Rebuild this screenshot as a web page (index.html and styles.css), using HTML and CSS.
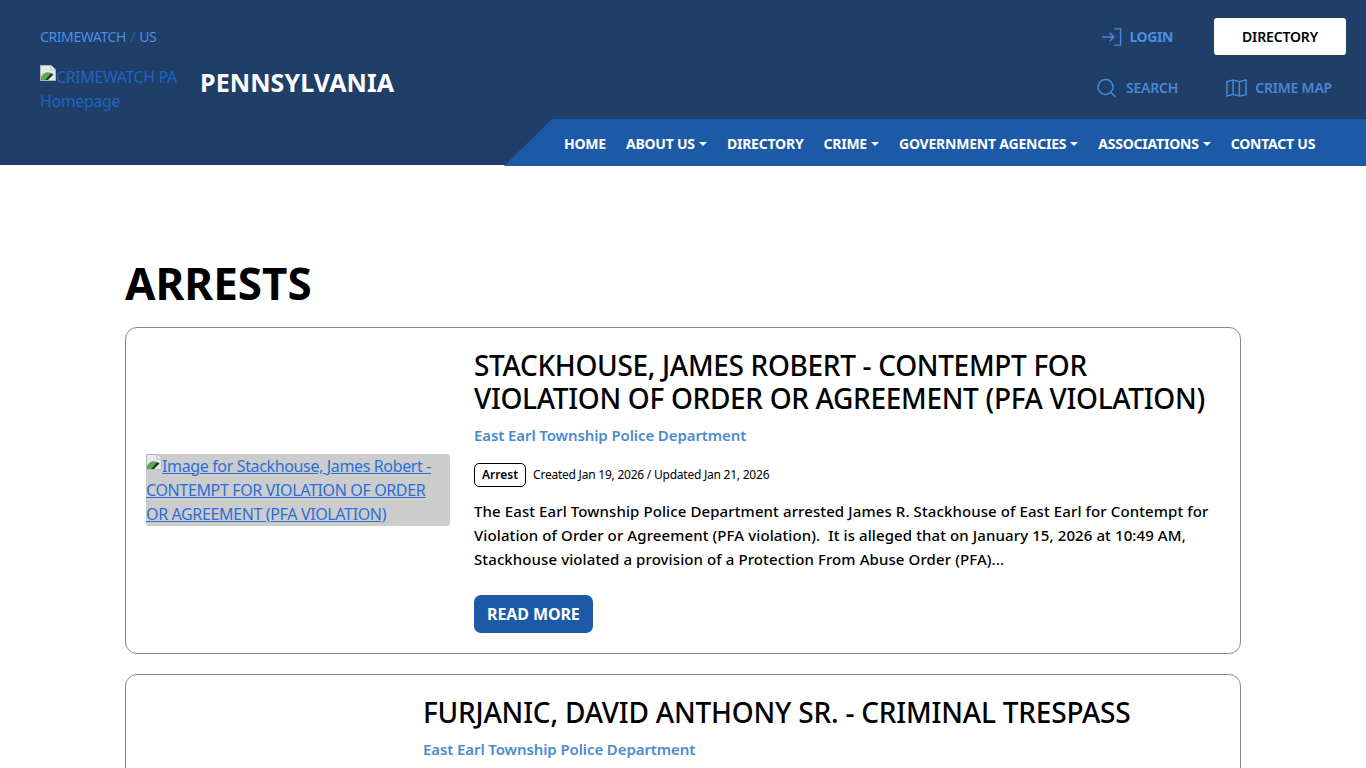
FILE: index.html
```html
<!DOCTYPE html>
<html lang="en">
<head>
  <meta charset="UTF-8" />
  <meta name="viewport" content="width=device-width, initial-scale=1.0" />
  <title>Arrests - CRIMEWATCH PA</title>
  <link rel="stylesheet" href="styles.css">
</head>

<body>
<header class="site-header">
  <div class="header-top">
    <div class="brand">
      <div class="crumbs"><a href="#">CRIMEWATCH</a> <span class="crumb-sep">/</span> <a href="#">US</a></div>
      <div class="brand-row">
        <a class="brand-logo" href="#"><svg class="broken" viewBox="0 0 16 16"><path d="M0.5 0.5H11L15.5 5V15.5H0.5Z" fill="#e6e8f0" stroke="#b5b8b5"/><path d="M11 0.5V5H15.500" fill="#fff" stroke="#b5b8b5"/><path d="M1 15V12C3 8 7 6 11 8L5 15Z" fill="#5da84a"/><path d="M5 15L11 8L13.500 9.500L8 15Z" fill="#1d3d1d"/></svg>CRIMEWATCH PA Homepage</a>
        <span class="state">PENNSYLVANIA</span>
      </div>
    </div>
    <div class="tools">
      <div class="tools-row">
        <a class="tool tool-login" href="#">
          <svg class="icon" viewBox="0 0 22 20"><path d="M1 10H13M9 5.500L13.500 10L9 14.500M14 1.500H20.500V18.500H14"/></svg>
          LOGIN
        </a>
        <a class="dir-btn" href="#">DIRECTORY</a>
      </div>
      <div class="tools-row tools-row-low">
        <a class="tool" href="#">
          <svg class="icon" viewBox="0 0 20 20"><circle cx="9" cy="9" r="7.500"/><path d="M14.500 14.500L19 19"/></svg>
          SEARCH
        </a>
        <a class="tool tool-map" href="#">
          <svg class="icon" viewBox="0 0 22 20"><path d="M1 3.500L7.500 1.500L14 3.500L21 1.500V17L14 18.500L7.500 16.500L1 18.500ZM7.500 1.500V16.500M14 3.500V18.500"/></svg>
          CRIME MAP
        </a>
      </div>
    </div>
  </div>
  <nav class="navbar">
    <ul>
      <li><a href="#">HOME</a></li>
      <li><a class="caret" href="#">ABOUT US</a></li>
      <li><a href="#">DIRECTORY</a></li>
      <li><a class="caret" href="#">CRIME</a></li>
      <li><a class="caret" href="#">GOVERNMENT AGENCIES</a></li>
      <li><a class="caret" href="#">ASSOCIATIONS</a></li>
      <li><a href="#">CONTACT US</a></li>
    </ul>
  </nav>
</header>

<main class="content">
  <h1>ARRESTS</h1>

  <article class="card">
    <div class="card-media">
      <a class="media-box" href="#"><svg class="broken" viewBox="0 0 16 16"><path d="M0.5 0.5H11L15.5 5V15.5H0.5Z" fill="#e6e8f0" stroke="#b5b8b5"/><path d="M11 0.5V5H15.500" fill="#fff" stroke="#b5b8b5"/><path d="M1 15V12C3 8 7 6 11 8L5 15Z" fill="#5da84a"/><path d="M5 15L11 8L13.500 9.500L8 15Z" fill="#1d3d1d"/></svg>Image for Stackhouse, James Robert - CONTEMPT FOR VIOLATION OF ORDER OR AGREEMENT (PFA VIOLATION)</a>
    </div>
    <div class="card-body">
      <h2>STACKHOUSE, JAMES ROBERT - CONTEMPT FOR VIOLATION OF ORDER OR AGREEMENT (PFA VIOLATION)</h2>
      <a class="agency" href="#">East Earl Township Police Department</a>
      <div class="meta"><span class="tag">Arrest</span> Created Jan 19, 2026 / Updated Jan 21, 2026</div>
      <p>The East Earl Township Police Department arrested James R. Stackhouse of East Earl for Contempt for Violation of Order or Agreement (PFA violation).&nbsp; It is alleged that on January 15, 2026 at 10:49 AM, Stackhouse violated a provision of a Protection From Abuse Order (PFA)...</p>
      <a class="read-more" href="#">READ MORE</a>
    </div>
  </article>

  <article class="card card-short">
    <div class="card-media card-media-narrow"></div>
    <div class="card-body">
      <h2>FURJANIC, DAVID ANTHONY SR. - CRIMINAL TRESPASS</h2>
      <a class="agency" href="#">East Earl Township Police Department</a>
    </div>
  </article>
</main>
</body>
</html>
```

FILE: styles.css
```css
html {
  overflow: hidden;
}

body {
  margin: 0;
  font-family: "Noto Sans", "Open Sans", sans-serif;
  color: #000;
  background-color: #fff;
}

a {
  text-decoration: none;
}

.site-header {
  height: 165px;
  background-color: #1f3e68;
  display: flex;
  flex-direction: column;
  justify-content: space-between;
}

.header-top {
  display: flex;
  justify-content: space-between;
  padding: 18px 20px 0 40px;
}

.crumbs {
  font-size: 14px;
  line-height: 38px;
  height: 38px;
  letter-spacing: -0.4px;
  color: #3d5f90;
}

.crumbs a {
  color: #4a90e2;
}

.crumb-sep {
  padding: 0 1px;
}

.brand-row {
  display: flex;
  align-items: center;
  margin-top: 9px;
}

.brand-logo {
  width: 160px;
  font-size: 16px;
  line-height: 24px;
  letter-spacing: -0.4px;
  color: #1f63c4;
}

.broken {
  width: 16px;
  height: 16px;
  vertical-align: 2px;
}

.state {
  font-size: 25px;
  font-weight: 700;
  letter-spacing: 0.1px;
  color: #fff;
  margin-top: -14px;
}

.tools-row {
  display: flex;
  justify-content: flex-end;
  align-items: center;
  height: 37px;
}

.tools-row-low {
  margin-top: 14px;
  gap: 48px;
  padding-right: 14px;
}

.tool {
  display: flex;
  align-items: center;
  gap: 9px;
  font-size: 14px;
  font-weight: 600;
  letter-spacing: -0.2px;
  color: #4a86d4;
}

.tool-map {
  gap: 8px;
}

.tool-login {
  margin-right: 41px;
  gap: 7px;
  font-weight: 700;
  letter-spacing: -0.4px;
  color: #4d8fe0;
}

.icon {
  width: 21px;
  height: 20px;
  fill: none;
  stroke: #4a8ad8;
  stroke-width: 1.500;
}

.dir-btn {
  width: 132px;
  height: 37px;
  line-height: 37px;
  text-align: center;
  background-color: #fff;
  border-radius: 3px;
  color: #000;
  font-size: 14px;
  font-weight: 600;
  letter-spacing: -0.15px;
}

.navbar {
  align-self: flex-end;
  width: 862px;
  height: 47px;
  flex: none;
  margin-bottom: -1px;
  box-sizing: border-box;
  padding-left: 50px;
  background-color: #1c59a6;
  clip-path: polygon(48px 0, 100% 0, 100% 100%, 0 100%);
}

.navbar ul {
  list-style: none;
  margin: 0;
  padding: 0;
  display: flex;
  gap: 20px;
}

.navbar a {
  display: block;
  padding-left: 10px;
  font-size: 14px;
  line-height: 50px;
  font-weight: 700;
  letter-spacing: -0.22px;
  color: #fff;
}

.navbar li + li a {
  padding-left: 0;
}

.caret::after {
  content: "";
  display: inline-block;
  margin-left: 4px;
  vertical-align: 3px;
  border-top: 4px solid #fff;
  border-left: 4px solid transparent;
  border-right: 4px solid transparent;
}

.content {
  width: 1116px;
  margin: 0 auto;
}

h1 {
  margin: 90px 0 16px;
  font-size: 44px;
  line-height: 56px;
  font-weight: 700;
}

.card {
  display: flex;
  box-sizing: border-box;
  gap: 24px;
  padding: 20px;
  margin-bottom: 20px;
  border: 1px solid #888;
  border-radius: 12px;
  height: 327px;
}

.card-media {
  flex: 0 0 304px;
  display: flex;
  align-items: center;
  padding-bottom: 2px;
}

.card-media-narrow {
  flex-basis: 253px;
}

.media-box {
  display: block;
  background-color: #ccc;
  border-radius: 3px;
  font-size: 16px;
  line-height: 24px;
  letter-spacing: -0.36px;
  color: #2b6fd6;
  text-decoration: underline;
}

.card-body {
  flex: 1;
  padding-top: 1px;
}

h2 {
  margin: 0 0 8px;
  font-size: 28px;
  line-height: 33px;
  font-weight: 500;
  letter-spacing: -0.32px;
}

.card-short h2 {
  letter-spacing: -0.2px;
}

.agency {
  display: block;
  font-size: 15px;
  line-height: 24px;
  font-weight: 600;
  letter-spacing: -0.1px;
  color: #4a8bd0;
}

.meta {
  display: flex;
  align-items: center;
  gap: 7px;
  margin-top: 16px;
  font-size: 12px;
  line-height: 22px;
  letter-spacing: -0.23px;
}

.tag {
  border: 1px solid #000;
  border-radius: 5px;
  padding: 0 7px;
  font-weight: 600;
  letter-spacing: 0;
}

p {
  margin: 12px 0 0;
  font-size: 15px;
  line-height: 24px;
  font-weight: 500;
  letter-spacing: 0.1px;
}

.read-more {
  display: inline-block;
  margin-top: 24px;
  padding: 0 13px;
  height: 38px;
  line-height: 38px;
  background-color: #1c59a6;
  border-radius: 7px;
  color: #fff;
  font-size: 16px;
  font-weight: 700;
  letter-spacing: -0.1px;
}
```
